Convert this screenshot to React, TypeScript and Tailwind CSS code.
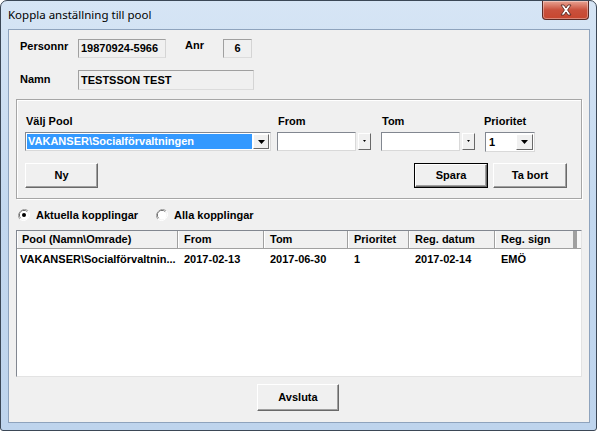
import React from "react";

const lbl = "font-bold text-[11px] leading-[13px] text-black";

function ReadBox({ w, text }: { w: string; text: string }) {
  return (
    <div
      className={`${w} h-full bg-[#f0f0f0] border border-t-[#a0a0a0] border-l-[#a0a0a0] border-r-[#d4d4d4] border-b-[#dcdcdc] flex items-center pl-[2px] ${lbl}`}
    >
      {text}
    </div>
  );
}

function Tri({ small }: { small?: boolean }) {
  return small ? (
    <svg width="5" height="3" viewBox="0 0 5 3">
      <path d="M1 0h3L2.5 2z" fill="#000" />
    </svg>
  ) : (
    <svg width="7" height="4" viewBox="0 0 7 4">
      <path d="M0 0h7L3.5 4z" fill="#000" />
    </svg>
  );
}

function DropBtn({ w, small }: { w: string; small?: boolean }) {
  return (
    <div
      className={`${w} h-full bg-[#f0f0f0] border border-t-[#ffffff] border-l-[#ffffff] border-r-[#696969] border-b-[#696969] flex items-center justify-center`}
    >
      <Tri small={small} />
    </div>
  );
}

function Btn({ w, h, text, def }: { w: string; h: string; text: string; def?: boolean }) {
  return (
    <div className={`${w} ${h} ${def ? "border border-black" : ""} flex`}>
      <div className="flex-1 bg-[#f0f0f0] border border-t-[#ffffff] border-l-[#ffffff] border-r-[#696969] border-b-[#696969] shadow-[inset_-1px_-1px_0_#a0a0a0] flex items-center justify-center">
        <span className={lbl}>{text}</span>
      </div>
    </div>
  );
}

function Radio({ on }: { on?: boolean }) {
  return (
    <svg width="12" height="12" viewBox="0 0 12 12">
      <path d="M10.2 1.8A6 6 0 0 0 1.8 10.2" fill="none" stroke="#a0a0a0" strokeWidth="1" />
      <path d="M1.8 10.2A6 6 0 0 0 10.2 1.8" fill="none" stroke="#ffffff" strokeWidth="1" />
      <circle cx="6" cy="6" r="4.6" fill="#ffffff" stroke="none" />
      <path d="M9.2 2.8A4.5 4.5 0 0 0 2.8 9.2" fill="none" stroke="#696969" strokeWidth="1" />
      <circle cx="6" cy="6" r="4" fill="#ffffff" />
      {on && <circle cx="6" cy="6" r="2" fill="#000" />}
    </svg>
  );
}

export default function App() {
  const cols = [
    { w: "w-[161px]", t: "Pool (Namn\\Omrade)" },
    { w: "w-[86px]", t: "From" },
    { w: "w-[84px]", t: "Tom" },
    { w: "w-[61px]", t: "Prioritet" },
    { w: "w-[86px]", t: "Reg. datum" },
    { w: "w-[79px]", t: "Reg. sign" },
  ];
  const row = ["VAKANSER\\Socialförvaltnin...", "2017-02-13", "2017-06-30", "1", "2017-02-14", "EMÖ"];
  return (
    <div
      className="w-[597px] h-[431px] rounded-t-[7px] rounded-b-[3px] border border-[#3b4756] bg-gradient-to-b from-[#d6e5f5] via-[#c3d8ef] to-[#bed4ed] flex flex-col pl-[7px] pr-[6px] pb-[7px]"
      style={{ fontFamily: '"Liberation Sans", Arial, sans-serif' }}
    >
      {/* title bar */}
      <div className="h-[28px] flex justify-between items-start">
        <div
          className="pt-[6px] text-[11.5px] leading-[16px] text-black"
          style={{ fontFamily: '"Noto Sans", "Open Sans", sans-serif' }}
        >
          Koppla anställning till pool
        </div>
        <div className="w-[47px] h-[19px] mr-[1px] rounded-b-[4px] border border-t-0 border-[#5a2a25] bg-gradient-to-b from-[#e8a393] via-[#c9503c] to-[#c7462f] flex items-center justify-center shadow-[inset_0_0_0_1px_rgba(255,255,255,0.35)]">
          <svg width="14" height="12" viewBox="0 0 14 12">
            <path
              d="M2 1h3l2 3 2-3h3L8.6 6 12 11H9L7 8 5 11H2l3.4-5z"
              fill="#ffffff"
              stroke="#4b1d17"
              strokeWidth="0.8"
              strokeLinejoin="round"
            />
          </svg>
        </div>
      </div>

      {/* client */}
      <div className="flex-1 bg-[#f0f0f0] border border-[#8ea3bd] flex flex-col">
        {/* Personnr row */}
        <div className="mt-[9px] h-[19px] flex items-start">
          <div className={`ml-[11px] w-[58px] mt-[1px] ${lbl}`}>Personnr</div>
          <ReadBox w="w-[88px]" text="19870924-5966" />
          <div className={`ml-[19px] w-[38px] ${lbl}`}>Anr</div>
          <div className={`w-[29px] h-full bg-[#f0f0f0] border border-t-[#a0a0a0] border-l-[#a0a0a0] border-r-[#d4d4d4] border-b-[#dcdcdc] flex items-center justify-center ${lbl}`}>
            6
          </div>
        </div>
        {/* Namn row */}
        <div className="mt-[12px] h-[20px] flex items-start">
          <div className={`ml-[11px] w-[58px] mt-[3px] ${lbl}`}>Namn</div>
          <ReadBox w="w-[176px]" text="TESTSSON TEST" />
        </div>

        {/* group */}
        <div className="mt-[9px] ml-[7px] w-[566px] h-[100px] border border-[#a6a6a6] shadow-[inset_1px_1px_0_#ffffff,1px_1px_0_#ffffff] flex flex-col">
          <div className="mt-[15px] h-[13px] flex">
            <div className={`ml-[9px] w-[252px] ${lbl}`}>Välj Pool</div>
            <div className={`w-[104px] ${lbl}`}>From</div>
            <div className={`w-[102px] ${lbl}`}>Tom</div>
            <div className={lbl}>Prioritet</div>
          </div>
          <div className="mt-[4px] h-[19px] flex">
            <div className="ml-[8px] w-[246px] h-full bg-white border border-t-[#828790] border-l-[#828790] border-r-[#d9d9d9] border-b-[#d9d9d9] flex p-[1px]">
              <div className="flex-1 bg-[#3399ff] text-white font-bold text-[11px] leading-[15px] pl-[1px] mr-[1px]">
                VAKANSER\Socialförvaltningen
              </div>
              <DropBtn w="w-[16px]" />
            </div>
            <div className="ml-[6px] w-[79px] h-full bg-white border border-t-[#828790] border-l-[#828790] border-r-[#d9d9d9] border-b-[#d9d9d9]" />
            <div className="ml-[2px] w-[13px] h-full py-[1px]">
              <DropBtn w="w-full" small />
            </div>
            <div className="ml-[10px] w-[79px] h-full bg-white border border-t-[#828790] border-l-[#828790] border-r-[#d9d9d9] border-b-[#d9d9d9]" />
            <div className="ml-[2px] w-[13px] h-full py-[1px]">
              <DropBtn w="w-full" small />
            </div>
            <div className="ml-[10px] w-[50px] h-[20px] bg-white border border-t-[#828790] border-l-[#828790] border-r-[#d9d9d9] border-b-[#d9d9d9] flex p-[1px]">
              <div className={`flex-1 pl-[2px] leading-[16px] ${lbl}`}>1</div>
              <DropBtn w="w-[17px]" />
            </div>
          </div>
          <div className="mt-[12px] flex">
            <div className="ml-[8px]">
              <Btn w="w-[73px]" h="h-[25px]" text="Ny" />
            </div>
            <div className="ml-[316px]">
              <Btn w="w-[74px]" h="h-[25px]" text="Spara" def />
            </div>
            <div className="ml-[5px]">
              <Btn w="w-[74px]" h="h-[25px]" text="Ta bort" />
            </div>
          </div>
        </div>

        {/* radios */}
        <div className="mt-[9px] h-[14px] flex items-center">
          <div className="ml-[9px] flex items-center">
            <Radio on />
            <span className={`ml-[6px] ${lbl}`}>Aktuella kopplingar</span>
          </div>
          <div className="ml-[18px] flex items-center">
            <Radio />
            <span className={`ml-[6px] ${lbl}`}>Alla kopplingar</span>
          </div>
        </div>

        {/* table */}
        <div className="mt-[8px] ml-[7px] w-[566px] h-[147px] bg-white border border-t-[#828790] border-l-[#828790] border-r-[#e3e3e3] border-b-[#e3e3e3] flex flex-col">
          <div className="h-[18px] flex bg-[#f0f0f0] border-b border-[#a0a0a0]">
            {cols.map((c, i) => (
              <div
                key={i}
                className={`${c.w} h-full border-r border-r-[#a0a0a0] shadow-[inset_1px_0_0_#ffffff] flex items-center ${i === 0 ? "pl-[5px]" : "pl-[6px]"} ${lbl}`}
              >
                {c.t}
              </div>
            ))}
            <div className="w-[3px] h-full bg-[#a0a0a0]" />
            <div className="flex-1 h-full bg-[#f7f7f7]" />
          </div>
          <div className="h-[20px] flex items-center">
            {cols.map((c, i) => (
              <div key={i} className={`${c.w} ${i === 0 ? "pl-[3px]" : "pl-[6px]"} ${lbl} whitespace-nowrap overflow-hidden`}>
                {row[i]}
              </div>
            ))}
          </div>
        </div>

        {/* Avsluta */}
        <div className="mt-[7px] ml-[248px]">
          <Btn w="w-[82px]" h="h-[27px]" text="Avsluta" />
        </div>
      </div>
    </div>
  );
}
